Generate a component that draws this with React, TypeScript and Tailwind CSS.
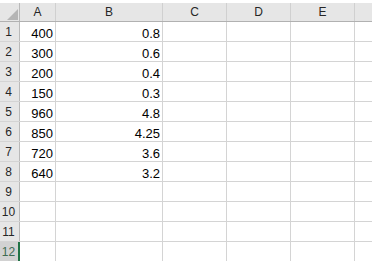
const columns = [
  { key: "A", width: "w-[36px]" },
  { key: "B", width: "w-[107px]" },
  { key: "C", width: "w-[64px]" },
  { key: "D", width: "w-[64px]" },
  { key: "E", width: "w-[64px]" },
];

const data: [string, string][] = [
  ["400", "0.8"],
  ["300", "0.6"],
  ["200", "0.4"],
  ["150", "0.3"],
  ["960", "4.8"],
  ["850", "4.25"],
  ["720", "3.6"],
  ["640", "3.2"],
];

const rowCount = 12;
const selectedRow = 12;

function CornerCell() {
  return (
    <div className="relative h-full w-[20px] shrink-0 border-r border-[#b9b9b9]">
      <svg className="absolute left-[7px] top-[6px]" width="11" height="11" viewBox="0 0 11 11">
        <polygon points="11,0 11,11 0,11" fill="#b5b5b5" />
      </svg>
    </div>
  );
}

function HeaderRow() {
  return (
    <div className="flex h-[19px] border-b border-[#b1b1b1] bg-[#e6e6e6] text-[12px] leading-[18px] text-[#262626]">
      <CornerCell />
      {columns.map((col) => (
        <div
          key={col.key}
          className={`${col.width} shrink-0 border-r border-[#d0d0d0] text-center`}
        >
          {col.key}
        </div>
      ))}
      <div className="flex-1" />
    </div>
  );
}

function SheetRow({ index }: { index: number }) {
  const values = data[index - 1];
  const selected = index === selectedRow;

  return (
    <div className="flex h-[20px] border-b border-[#d4d4d4]">
      {/* Row header */}
      <div
        className={`relative w-[20px] shrink-0 border-r border-[#b9b9b9] text-center text-[12px] leading-[17px] ${
          selected ? "bg-[#d2d2d2] text-[#3f6b52]" : "bg-[#e6e6e6] text-[#262626]"
        }`}
      >
        <div className="pr-[2px] pt-[2px]">{index}</div>
        {selected && <div className="absolute right-[-1px] top-0 h-[20px] w-[2px] bg-[#217346]" />}
      </div>

      {columns.map((col, i) => (
        <div
          key={col.key}
          className={`${col.width} flex shrink-0 items-end justify-end border-r border-[#d4d4d4] pr-[2px] text-[13px] leading-[15px] text-black`}
        >
          {values && i < 2 ? values[i] : ""}
        </div>
      ))}
      <div className="flex-1" />
    </div>
  );
}

export default function App() {
  return (
    <div className="h-[261px] w-[372px] overflow-hidden bg-white font-['Liberation_Sans',Arial,sans-serif]">
      <div className="h-[3px]" />
      <HeaderRow />
      {Array.from({ length: rowCount }, (_, i) => (
        <SheetRow key={i} index={i + 1} />
      ))}
    </div>
  );
}
